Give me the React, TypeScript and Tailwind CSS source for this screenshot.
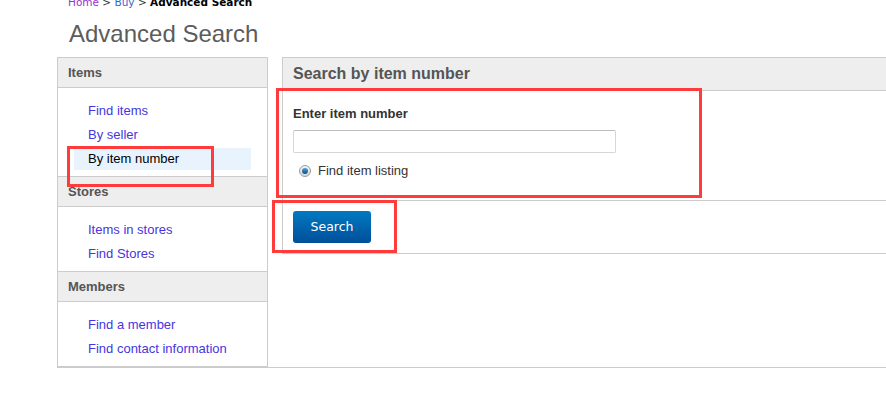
const sections = [
  { title: 'Items', links: ['Find items', 'By seller', 'By item number'], active: 'By item number' },
  { title: 'Stores', links: ['Items in stores', 'Find Stores'] },
  { title: 'Members', links: ['Find a member', 'Find contact information'] },
];

function Sidebar() {
  return (
    <div className="w-[211px] shrink-0 border border-[#ccc]">
      {sections.map((s, i) => (
        <div key={s.title} className={i > 0 ? 'border-t border-[#ccc]' : ''}>
          <div className="h-[30px] flex items-center pl-[10px] bg-[#eee] border-b border-[#ccc] text-[13px] font-bold text-[#555]">
            {s.title}
          </div>
          <ul className="pt-[12px] pb-[6px] pl-[16px] pr-[16px] flex flex-col gap-[2px]">
            {s.links.map((l) => (
              <li
                key={l}
                className={
                  l === s.active
                    ? 'h-[22px] flex items-center px-[14px] bg-[#e8f3fd] text-[13px] text-black'
                    : 'h-[22px] flex items-center px-[14px] text-[13px] text-[#4436e0]'
                }
              >
                {l}
              </li>
            ))}
          </ul>
        </div>
      ))}
    </div>
  );
}

function SearchPanel() {
  return (
    <div className="flex-1 pl-[14px]">
      <div className="border-t border-l border-[#ccc]">
        <div className="h-[33px] flex items-center pl-[10px] bg-[#eee] border-b border-[#ccc] text-[16px] font-bold text-[#555]">
          Search by item number
        </div>
        <div className="pt-[15px] pb-[20px] pl-[10px] border-b border-[#ccc]">
          <div className="h-[16px] leading-[16px] text-[13px] font-bold text-[#333]">Enter item number</div>
          <div className="mt-[8px] w-[323px] h-[23px] border border-[#d6d6d6] border-t-[#bdbdbd] rounded-[2px] bg-white" />
          <div className="mt-[9px] h-[18px] flex items-center">
            <span className="ml-[6px] w-[12px] h-[12px] rounded-full border border-[#9a9a9a] bg-gradient-to-b from-[#f4f4f4] to-[#d8d8d8] flex items-center justify-center">
              <span className="w-[6px] h-[6px] rounded-full bg-gradient-to-b from-[#4aa3e0] to-[#0a4f8c]" />
            </span>
            <span className="ml-[7px] text-[13px] text-[#333]">Find item listing</span>
          </div>
        </div>
        <div className="pt-[10px] pb-[10px] pl-[10px] border-b border-[#ccc]">
          <button className="w-[78px] h-[32px] rounded-[3px] bg-gradient-to-b from-[#007ac2] to-[#004e99] text-white text-[12.5px] font-['DejaVu_Sans',sans-serif]">
            Search
          </button>
        </div>
      </div>
    </div>
  );
}

export default function App() {
  return (
    <div className="relative w-[886px] h-[415px] overflow-hidden bg-white font-['Liberation_Sans',Arial,sans-serif]">
      <div className="-mt-[4px] h-[13px] leading-[13px] pl-[68px] text-[10.5px] font-['DejaVu_Sans',Verdana,sans-serif] text-[#333] whitespace-nowrap">
        <span className="text-[#9933cc]">Home</span> &gt; <span className="text-[#3366cc]">Buy</span> &gt;{' '}
        <span className="font-bold text-black">Advanced Search</span>
      </div>
      <h1 className="mt-[10px] pl-[69px] text-[24px] leading-[29px] text-[#5c5c5c]">Advanced Search</h1>
      <div className="mt-[9px] ml-[57px] w-[860px] flex border-b border-[#ccc]">
        <Sidebar />
        <SearchPanel />
      </div>

      {/* red annotation boxes */}
      <div className="absolute left-[67px] top-[146px] w-[147px] h-[41px] border-[3px] border-[#ff3b3b]" />
      <div className="absolute left-[276px] top-[88px] w-[426px] h-[110px] border-[3px] border-[#ff3b3b]" />
      <div className="absolute left-[272px] top-[200px] w-[125px] h-[53px] border-[3px] border-[#ff3b3b]" />
    </div>
  );
}
